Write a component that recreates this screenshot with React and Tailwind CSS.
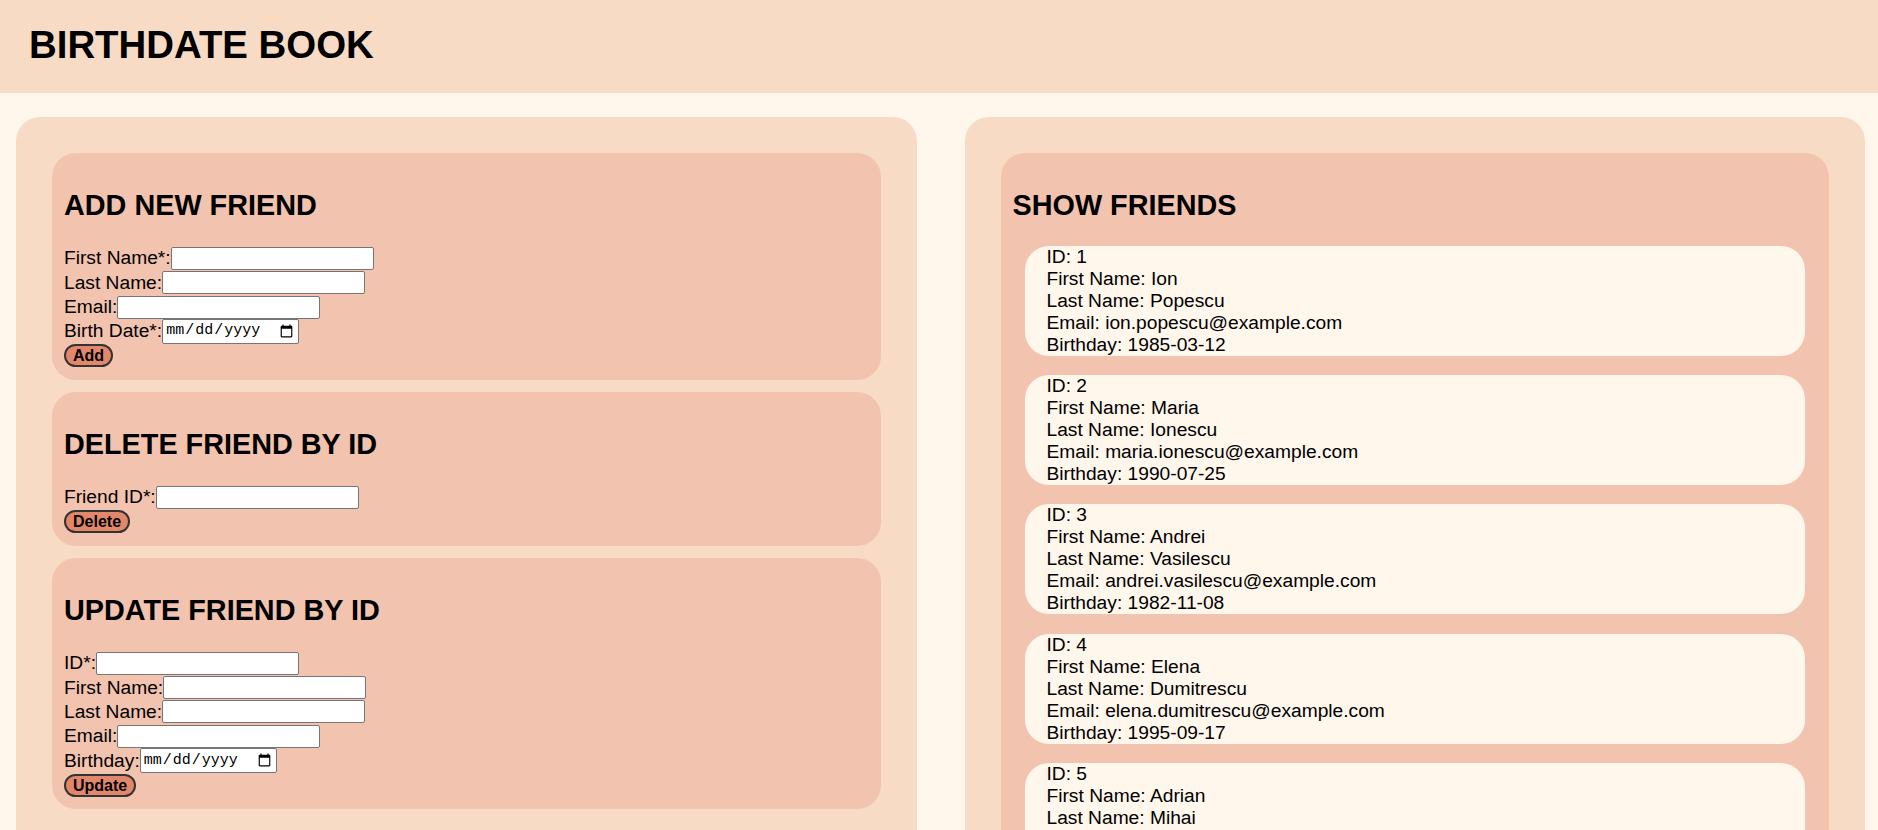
import React from "react";

const friends = [
  { id: 1, first: "Ion", last: "Popescu", email: "ion.popescu@example.com", birthday: "1985-03-12" },
  { id: 2, first: "Maria", last: "Ionescu", email: "maria.ionescu@example.com", birthday: "1990-07-25" },
  { id: 3, first: "Andrei", last: "Vasilescu", email: "andrei.vasilescu@example.com", birthday: "1982-11-08" },
  { id: 4, first: "Elena", last: "Dumitrescu", email: "elena.dumitrescu@example.com", birthday: "1995-09-17" },
  { id: 5, first: "Adrian", last: "Mihai", email: "adrian.mihai@example.com", birthday: "1988-05-21" },
];

function TextRow({ label }) {
  return (
    <div className="flex items-center h-[24.4px]">
      <span className="leading-[22px] whitespace-pre">{label}</span>
      <input
        type="text"
        className="h-[23px] w-[203px] bg-white border border-[#767676] rounded-[2px] px-[2px] text-[16px] outline-none"
      />
    </div>
  );
}

function DateRow({ label }) {
  return (
    <div className="flex items-center h-[24.4px]">
      <span className="leading-[22px] whitespace-pre">{label}</span>
      <input
        type="date"
        className="h-[25px] w-[137px] bg-white border border-[#767676] rounded-[2px] px-[2px] text-[15px] text-black outline-none"
        style={{ fontFamily: '"Liberation Mono", "DejaVu Sans Mono", monospace' }}
      />
    </div>
  );
}

function Btn({ children }) {
  return (
    <div className="flex items-center h-[24.4px]">
      <button className="h-[23px] px-[7px] border-2 border-[#333] rounded-full bg-[#e3876b] text-[16px] font-bold leading-[17px] text-black">
        {children}
      </button>
    </div>
  );
}

function Section({ title, children }) {
  return (
    <div className="bg-[#f2c3ae] rounded-[24px] p-[12px]">
      <h2 className="text-[28.8px] font-bold leading-[33.1px] mt-[24px] mb-[24px]">{title}</h2>
      <div className="flex flex-col">{children}</div>
    </div>
  );
}

export default function App() {
  return (
    <div
      className="h-[830px] overflow-hidden bg-[#fff6ec] text-black text-[19.2px]"
      style={{ fontFamily: '"Liberation Sans", Arial, sans-serif' }}
    >
      <header className="h-[93px] bg-[#f8dbc5] pt-[23px] px-[29px]">
        <h1 className="text-[38.4px] font-bold leading-[44px]">BIRTHDATE BOOK</h1>
      </header>
      <main className="flex gap-[48px] pl-[16px] pr-[13px] pt-[24px]">
        <div className="flex-1 bg-[#f8dbc5] rounded-[24px] p-[36px] flex flex-col gap-[12px]">
          <Section title="ADD NEW FRIEND">
            <TextRow label="First Name*:" />
            <TextRow label="Last Name:" />
            <TextRow label="Email:" />
            <DateRow label="Birth Date*:" />
            <Btn>Add</Btn>
          </Section>
          <Section title="DELETE FRIEND BY ID">
            <TextRow label="Friend ID*:" />
            <Btn>Delete</Btn>
          </Section>
          <Section title="UPDATE FRIEND BY ID">
            <TextRow label="ID*:" />
            <TextRow label="First Name:" />
            <TextRow label="Last Name:" />
            <TextRow label="Email:" />
            <DateRow label="Birthday:" />
            <Btn>Update</Btn>
          </Section>
        </div>
        <div className="flex-1 bg-[#f8dbc5] rounded-[24px] p-[36px]">
          <div className="bg-[#f2c3ae] rounded-[24px] p-[12px]">
            <h2 className="text-[28.8px] font-bold leading-[33.1px] mt-[24px] mb-[24px]">SHOW FRIENDS</h2>
            <div className="flex flex-col gap-[19.2px] mx-[12px]">
              {friends.map((f) => (
                <div key={f.id} className="bg-[#fff6ec] rounded-[24px] pl-[22px] leading-[22px]">
                  <div>ID: {f.id}</div>
                  <div>First Name: {f.first}</div>
                  <div>Last Name: {f.last}</div>
                  <div>Email: {f.email}</div>
                  <div>Birthday: {f.birthday}</div>
                </div>
              ))}
            </div>
          </div>
        </div>
      </main>
    </div>
  );
}
